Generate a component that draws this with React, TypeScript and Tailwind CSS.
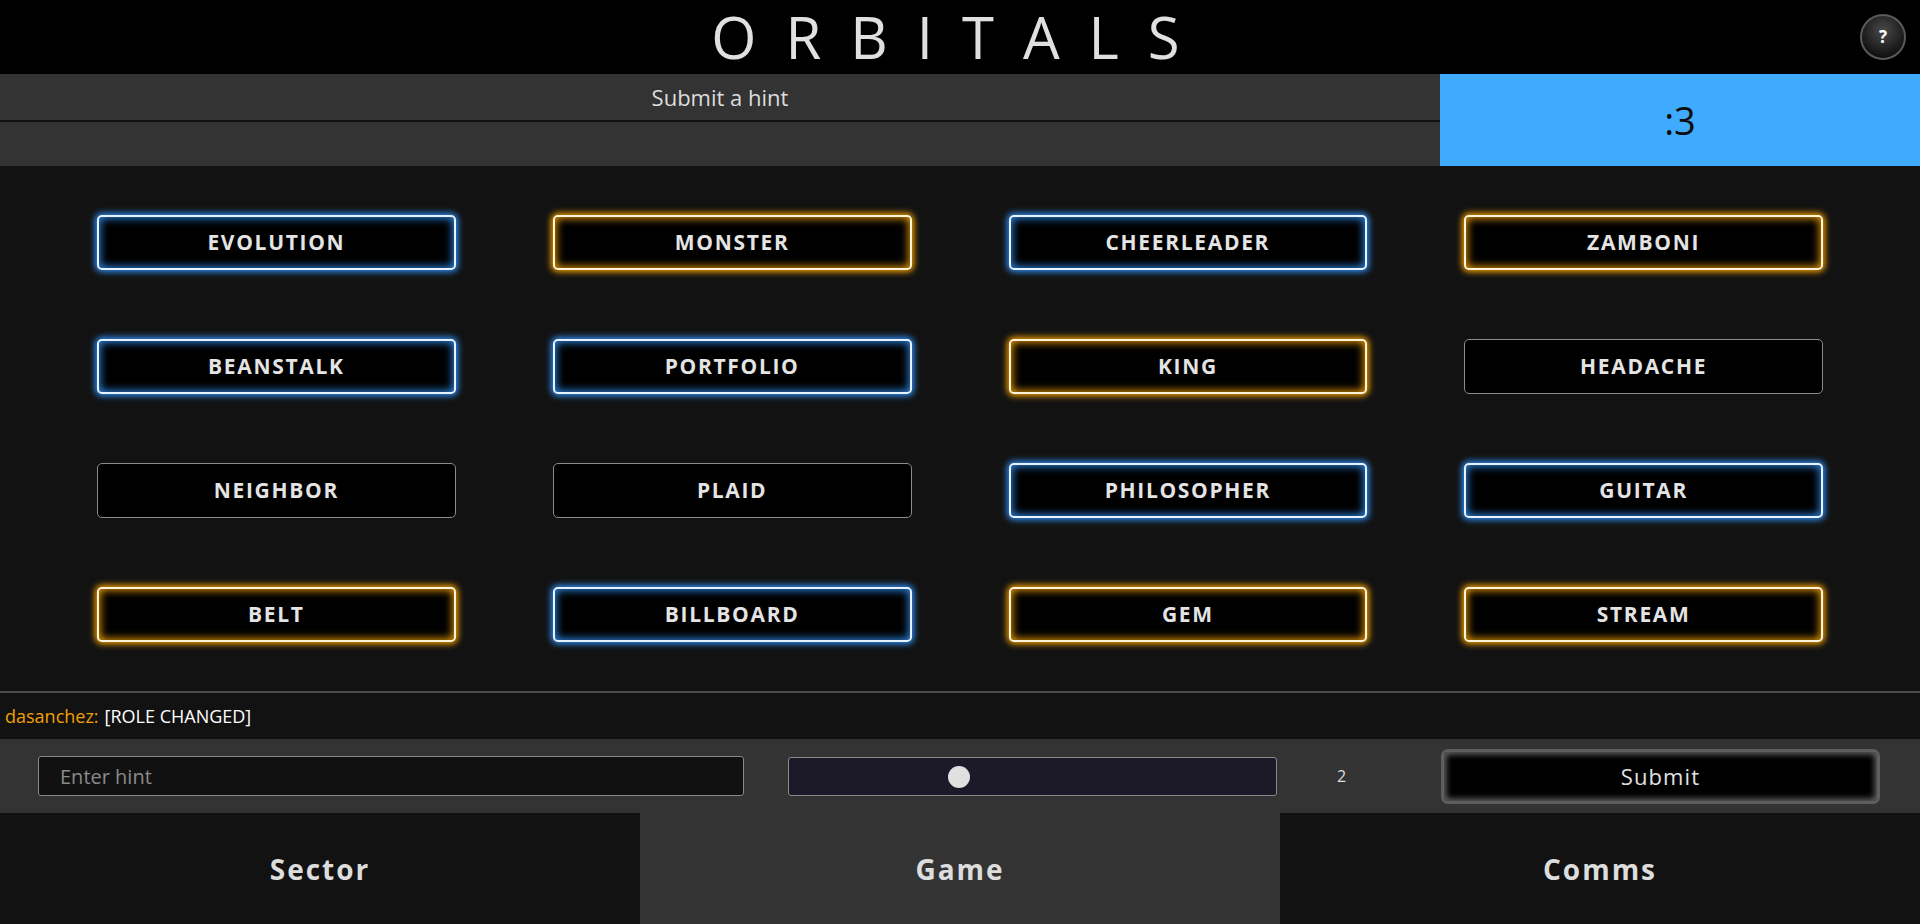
const cards: { word: string; tone: 'blue' | 'orange' | 'none' }[] = [
  { word: 'EVOLUTION', tone: 'blue' },
  { word: 'MONSTER', tone: 'orange' },
  { word: 'CHEERLEADER', tone: 'blue' },
  { word: 'ZAMBONI', tone: 'orange' },
  { word: 'BEANSTALK', tone: 'blue' },
  { word: 'PORTFOLIO', tone: 'blue' },
  { word: 'KING', tone: 'orange' },
  { word: 'HEADACHE', tone: 'none' },
  { word: 'NEIGHBOR', tone: 'none' },
  { word: 'PLAID', tone: 'none' },
  { word: 'PHILOSOPHER', tone: 'blue' },
  { word: 'GUITAR', tone: 'blue' },
  { word: 'BELT', tone: 'orange' },
  { word: 'BILLBOARD', tone: 'blue' },
  { word: 'GEM', tone: 'orange' },
  { word: 'STREAM', tone: 'orange' },
]

const toneClass = {
  blue: 'border-2 border-[#e6f2ff] shadow-[0_0_6px_2px_#2f8ef0,inset_0_0_8px_1px_#2f8ef0]',
  orange: 'border-2 border-[#fff3dc] shadow-[0_0_6px_2px_#f2a000,inset_0_0_8px_1px_#f2a000]',
  none: 'border border-[#8a8a8a]',
}

export default function App() {
  return (
    <div className="w-[1920px] h-[924px] flex flex-col bg-[#121212] text-[#dddddd] font-['Open_Sans',sans-serif] overflow-hidden">
      {/* Header */}
      <div className="relative h-[74px] shrink-0 bg-black flex items-center justify-center">
        <h1 className="w-[600px] text-center text-[58px] leading-[74px] font-medium tracking-[0.5em] text-[#e0e0e0] whitespace-nowrap">
          ORBITALS
        </h1>
        <button className="absolute right-[14px] top-[14px] w-[46px] h-[46px] rounded-full border-2 border-[#5a5a5a] bg-[radial-gradient(circle_at_50%_35%,#4a4a4a,#111111_75%)] text-white text-[17px] font-bold flex items-center justify-center">
          ?
        </button>
      </div>

      {/* Hint status */}
      <div className="h-[92px] shrink-0 flex">
        <div className="flex-1 flex flex-col bg-[#333333]">
          <div className="h-[46px] box-content flex items-center justify-center text-[22px] border-b-2 border-[#111]">
            Submit a hint
          </div>
          <div className="flex-1" />
        </div>
        <div className="w-[480px] bg-[#40aaff] flex items-center justify-center text-[38px] font-medium text-[#0c0c0c]">
          :3
        </div>
      </div>

      {/* Board */}
      <div className="h-[525px] shrink-0 grid grid-cols-4 gap-x-[97px] gap-y-[69px] px-[97px] pt-[49px] content-start">
        {cards.map((c) => (
          <button
            key={c.word}
            className={`h-[55px] rounded-[5px] bg-black flex items-center justify-center text-[21px] font-bold tracking-[0.08em] text-[#e4e4e4] ${toneClass[c.tone]}`}
          >
            {c.word}
          </button>
        ))}
      </div>

      <div className="h-[2px] shrink-0 bg-[#4a4a4a]" />

      {/* Chat */}
      <div className="h-[46px] shrink-0 flex items-center px-[5px] text-[18px]">
        <span className="text-[#f0a000]">dasanchez:</span>
        <span className="ml-[6px] text-white">[ROLE CHANGED]</span>
      </div>

      {/* Hint input */}
      <div className="h-[74px] shrink-0 bg-[#333333] flex items-center pl-[38px]">
        <input
          type="text"
          placeholder="Enter hint"
          className="w-[706px] h-[40px] bg-[#111] border border-[#888] rounded-[3px] px-[21px] text-[20px] text-[#ddd] placeholder:text-[#8a8a8a] outline-none"
        />
        <div className="relative ml-[44px] w-[489px] h-[39px] bg-[#1c1a28] border border-[#8a8a8a] rounded-[3px]">
          <div className="absolute left-[159px] top-[8px] w-[22px] h-[22px] rounded-full bg-[#e0e0e0]" />
        </div>
        <div className="w-[164px] pl-[60px] text-[16px] text-[#ddd]">2</div>
        <button className="w-[439px] h-[55px] rounded-[7px] bg-black border-[3px] border-[#5e5e5e] shadow-[inset_0_0_6px_2px_#6a6a6a] text-[22px] tracking-[0.05em] text-[#e0e0e0]">
          Submit
        </button>
      </div>

      {/* Tabs */}
      <div className="flex-1 flex">
        <div className="flex-1 bg-[#121212] flex items-center justify-center text-[28px] font-bold tracking-[2px]">
          Sector
        </div>
        <div className="flex-1 bg-[#333333] flex items-center justify-center text-[28px] font-bold tracking-[2px]">
          Game
        </div>
        <div className="flex-1 bg-[#121212] flex items-center justify-center text-[28px] font-bold tracking-[2px]">
          Comms
        </div>
      </div>
    </div>
  )
}
